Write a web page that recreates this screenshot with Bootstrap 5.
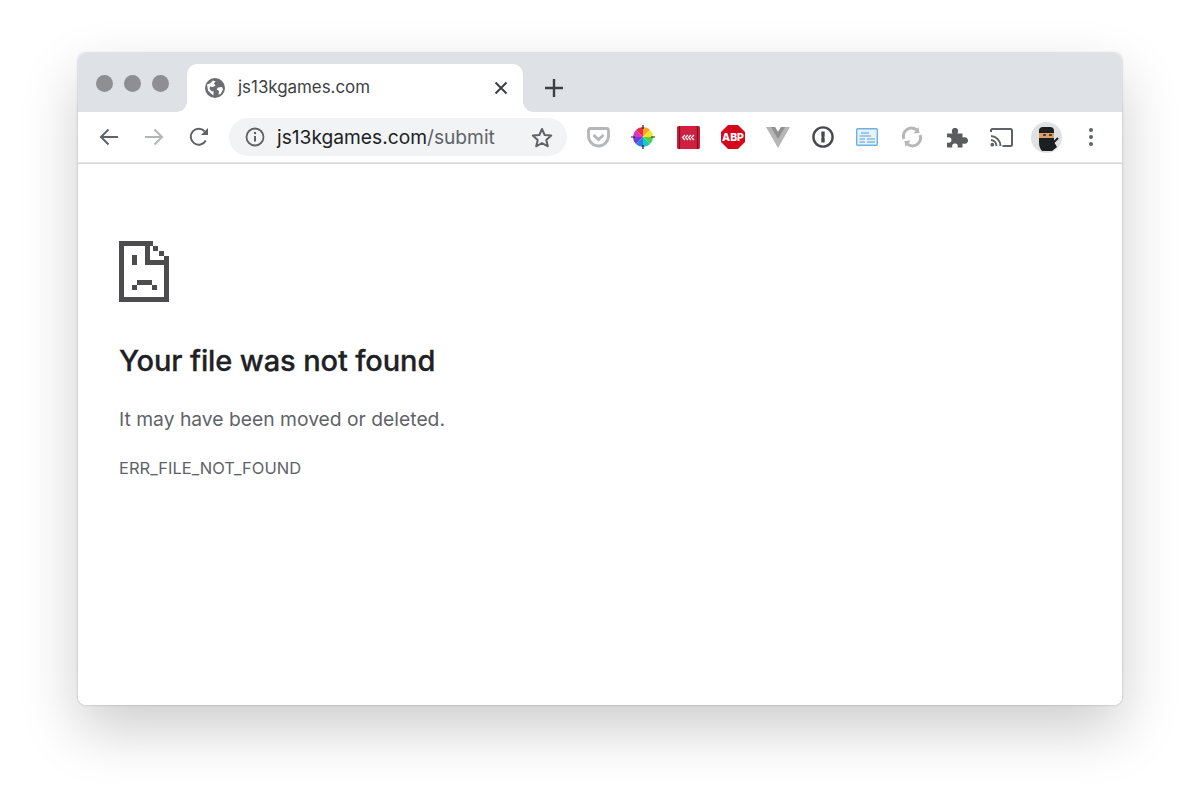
<!DOCTYPE html>
<html lang="en">

<head>
  <meta charset="UTF-8">
  <meta name="viewport" content="width=device-width, initial-scale=1.0">
  <title>Your file was not found</title>
  <link href="https://cdn.jsdelivr.net/npm/bootstrap@5.3.0/dist/css/bootstrap.min.css" rel="stylesheet">
  <style>
    body {
      background: #fff;
      font-family: Inter, "Liberation Sans", sans-serif;
      padding: 53px 78px 0;
      height: 808px;
      overflow: hidden;
    }
    .browser-window {
      height: 652px;
      background: #fff;
      border-radius: 8px;
      overflow: hidden;
    }
    .window-shadow {
      border-radius: 8px;
      box-shadow: 0 0 2px rgba(0, 0, 0, .32), 0 24px 58px rgba(0, 0, 0, .2);
    }
    .tab-strip {
      height: 59px;
      background: #dee1e6;
      padding-left: 18px;
    }
    .traffic-lights {
      width: 91px;
      height: 60px;
      gap: 11px;
    }
    .traffic-dot {
      width: 17px;
      height: 17px;
      border-radius: 50%;
      background: #8e8f93;
    }
    .active-tab {
      position: relative;
      width: 336px;
      height: 48px;
      margin-top: 11px;
      background: #fff;
      border-radius: 10px 10px 0 0;
      padding: 0 15px 0 18px;
      font-size: 16.9px;
      color: #3c4043;
    }
    .tab-label { margin-left: 5px; }
    .active-tab::before,
    .active-tab::after {
      content: "";
      position: absolute;
      bottom: 0;
      width: 10px;
      height: 10px;
      background: radial-gradient(circle at var(--cx) 0, #dee1e6 9.5px, #fff 10px);
    }
    .active-tab::before { left: -10px; --cx: 0; }
    .active-tab::after { right: -10px; --cx: 10px; }
    .new-tab {
      margin: 11px 0 0 22px;
      height: 48px;
    }
    .tool-bar {
      height: 52px;
      padding: 0 0 1px 9px;
      border-bottom: 1px solid #d5d7da;
      box-shadow: inset 0 -1px 0 #e6e7e9;
    }
    .tool-slot {
      width: 44.8px;
      height: 38px;
      flex: none;
    }
    .omni-box {
      width: 338px;
      height: 38px;
      margin-left: 7.600px;
      margin-right: 9.200px;
      padding: 0 14px 0 16px;
      border-radius: 19px;
      background: #f1f3f4;
      font-size: 19.2px;
      color: #202124;
    }
    .omni-path { color: #5f6368; }
    .error-pane {
      padding: 77px 41px 0;
    }
    .error-title {
      font-size: 29px;
      font-weight: 500;
      letter-spacing: -.12px;
      -webkit-text-stroke: .3px #202124;
      line-height: 36px;
      color: #202124;
      margin: 41px 0 0;
    }
    .error-text {
      font-size: 19.3px;
      line-height: 26px;
      color: #5f6368;
      margin: 27px 0 0;
    }
    .error-code {
      font-size: 16.5px;
      line-height: 20px;
      color: #5f6368;
      margin: 26px 0 0;
    }
  </style>
</head>

<body>
  <div class="window-shadow">
    <div class="browser-window d-flex flex-column">
      <div class="tab-strip d-flex">
        <div class="traffic-lights d-flex align-items-center flex-shrink-0">
          <span class="traffic-dot"></span><span class="traffic-dot"></span><span class="traffic-dot"></span>
        </div>
        <div class="active-tab d-flex align-items-center">
          <svg width="20" height="20" viewBox="0 0 20 20" class="me-2 flex-shrink-0">
            <circle cx="10" cy="10" r="10" fill="#6a6d71"/>
            <path d="M2 6.500 5 5.500 8 2.500 10.500 3.500 9 5.500 10.500 7.500 8 9 5 8.500 4.500 11 7 13.500 8.500 13 8.500 17.500 6 15.500 3 12.500ZM13 9.500 17 9 18 11.500 15.500 16 13.500 16.500 14 13 11.500 11.500Z" fill="#fff"/>
          </svg>
          <span class="tab-label flex-grow-1">js13kgames.com</span>
          <svg width="14" height="14" viewBox="0 0 14 14"><path d="M1.500 1.500 12.500 12.500M12.500 1.500 1.500 12.500" stroke="#3c4043" stroke-width="2" fill="none"/></svg>
        </div>
        <div class="new-tab d-flex align-items-center">
          <svg width="18" height="18" viewBox="0 0 18 18"><path d="M9 0V18M0 9H18" stroke="#3c4043" stroke-width="2.400"/></svg>
        </div>
      </div>

      <div class="tool-bar d-flex align-items-center">
        <div class="tool-slot d-flex align-items-center justify-content-center">
          <svg width="20" height="18" viewBox="0 0 20 18"><path d="M19 9H2M9.500 1.500 2 9l7.500 7.500" stroke="#5f6368" stroke-width="2" fill="none"/></svg>
        </div>
        <div class="tool-slot d-flex align-items-center justify-content-center">
          <svg width="20" height="18" viewBox="0 0 20 18"><path d="M1 9H18M10.500 1.500 18 9l-7.500 7.500" stroke="#b3b5b8" stroke-width="2" fill="none"/></svg>
        </div>
        <div class="tool-slot d-flex align-items-center justify-content-center">
          <svg width="20" height="20" viewBox="0 0 20 20"><path d="M16.800 13.500A8 8 0 1 1 15.700 4.300" stroke="#5f6368" stroke-width="2" fill="none"/><path d="M19 1V8H12Z" fill="#5f6368"/></svg>
        </div>
        <div class="omni-box d-flex align-items-center flex-shrink-0">
          <svg width="20" height="20" viewBox="0 0 20 20" class="flex-shrink-0 me-2"><circle cx="10" cy="10" r="8.500" stroke="#5f6368" stroke-width="1.800" fill="none"/><path d="M10 9v5.500" stroke="#5f6368" stroke-width="2"/><circle cx="10" cy="6" r="1.200" fill="#5f6368"/></svg>
          <span class="flex-grow-1 ms-1">js13kgames.com<span class="omni-path">/submit</span></span>
          <svg width="22" height="21" viewBox="0 0 22 21" class="flex-shrink-0"><path d="M11 2l2.700 6 6.500.6-4.900 4.300 1.500 6.400L11 16l-5.800 3.300 1.500-6.400L1.800 8.600 8.300 8Z" stroke="#5f6368" stroke-width="2" fill="none" stroke-linejoin="round"/></svg>
        </div>

        <div class="tool-slot d-flex align-items-center justify-content-center">
          <svg width="23" height="21" viewBox="0 0 23 21"><path d="M1.500 3.500Q1.500 1.500 3.500 1.500H19.500Q21.500 1.500 21.500 3.500V9A10 10 0 0 1 1.500 9Z" fill="none" stroke="#b4b6b8" stroke-width="2.800"/><path d="M6.500 8 11.500 12.500 16.500 8" fill="none" stroke="#b4b6b8" stroke-width="2.800"/></svg>
        </div>
        <div class="tool-slot d-flex align-items-center justify-content-center">
          <svg width="24" height="24" viewBox="0 0 24 24">
            <path d="M12 12 12 2A10 10 0 0 1 19.100 4.900Z" fill="#f5a623"/>
            <path d="M12 12 19.100 4.900A10 10 0 0 1 22 12Z" fill="#f3e324"/>
            <path d="M12 12H22A10 10 0 0 1 19.100 19.100Z" fill="#4cd14a"/>
            <path d="M12 12 19.100 19.100A10 10 0 0 1 12 22Z" fill="#18c9c0"/>
            <path d="M12 12V22A10 10 0 0 1 4.900 19.100Z" fill="#2b7de9"/>
            <path d="M12 12 4.900 19.100A10 10 0 0 1 2 12Z" fill="#6a3fd8"/>
            <path d="M12 12H2A10 10 0 0 1 4.900 4.900Z" fill="#d935c9"/>
            <path d="M12 12 4.900 4.900A10 10 0 0 1 12 2Z" fill="#ee2b45"/>
            <path d="M12 0V24M0 12H24" stroke="#1b1b1b" stroke-width="1.200" stroke-dasharray="4 16"/>
          </svg>
        </div>
        <div class="tool-slot d-flex align-items-center justify-content-center">
          <svg width="23" height="23" viewBox="0 0 23 23"><rect width="23" height="23" rx="1.500" fill="#d0203f"/><path d="M2.500 0V23M20.500 0V23" stroke="#7e0e22" stroke-width="1.200"/><path d="M8 9 5.500 11.500 8 14M11 9 8.500 11.500 11 14M14 9 11.500 11.500 14 14M17 9 14.500 11.500 17 14" stroke="#fff" stroke-width="1.200" fill="none"/></svg>
        </div>
        <div class="tool-slot d-flex align-items-center justify-content-center">
          <svg width="24" height="24" viewBox="0 0 24 24"><path d="M7 0H17L24 7V17L17 24H7L0 17V7Z" fill="#d4071c"/><text x="12" y="16" text-anchor="middle" fill="#fff" font-size="10.500" font-weight="800" font-family="Inter, 'Liberation Sans', sans-serif">ABP</text></svg>
        </div>
        <div class="tool-slot d-flex align-items-center justify-content-center">
          <svg width="24" height="21" viewBox="0 0 24 21"><path d="M0 0H9L12 5 15 0H24L12 21Z" fill="#b5b5b5"/><path d="M5 0H9L12 5 15 0H19L12 12Z" fill="#8f8f8f"/></svg>
        </div>
        <div class="tool-slot d-flex align-items-center justify-content-center">
          <svg width="22" height="22" viewBox="0 0 22 22"><circle cx="11" cy="11" r="9.600" fill="none" stroke="#48494b" stroke-width="2.400"/><path d="M9.300 5.500H12.700V10.500L12 11 12.700 11.700V16.500H9.300V11.700L10 11 9.300 10.500Z" fill="#48494b"/></svg>
        </div>
        <div class="tool-slot d-flex align-items-center justify-content-center">
          <svg width="22" height="18" viewBox="0 0 22 18"><rect x=".7" y=".7" width="20.600" height="16.600" rx="1" fill="#e6f2fa" stroke="#6fb1dc" stroke-width="1.400"/><path d="M5 5H13M3.500 8H15M3.500 11H9M11 11H19M3.500 14H9M11 14H19" stroke="#88bbdf" stroke-width="1.300"/></svg>
        </div>
        <div class="tool-slot d-flex align-items-center justify-content-center">
          <svg width="20" height="22" viewBox="0 0 20 22"><path d="M2 13A8 8 0 0 1 14.500 3.900M18 9A8 8 0 0 1 5.500 18.100" fill="none" stroke="#b5b6b8" stroke-width="3"/><path d="M11.500 7.500 17.500 7 16.500 1ZM8.500 14.500 2.500 15 3.500 21Z" fill="#b5b6b8"/></svg>
        </div>
        <div class="tool-slot d-flex align-items-center justify-content-center">
          <svg width="22" height="21" viewBox="0 0 22 21"><path d="M1 6.500H6.500C5 3 6.500 1 9 1S13 3 11.500 6.500H16.500V10.500C20 9.500 22 11 22 13.500S20 17.500 16.500 16.500V20.500H11.500C12.500 17.500 11 16.500 9 16.500S5.500 17.500 6.500 20.500H1V15.500C4 16.500 5.500 15 5.500 13S4 9.500 1 10.500Z" fill="#5a5c60"/></svg>
        </div>
        <div class="tool-slot d-flex align-items-center justify-content-center">
          <svg width="23" height="19" viewBox="0 0 23 19"><path d="M1 4V2.500Q1 1 2.500 1H20.500Q22 1 22 2.500V16.500Q22 18 20.500 18H12.500" fill="none" stroke="#5f6368" stroke-width="2"/><path d="M1 8A10 10 0 0 1 10.500 18M1 12A6 6 0 0 1 6.500 18" fill="none" stroke="#5f6368" stroke-width="2"/><circle cx="2.300" cy="16.700" r="1.900" fill="#5f6368"/></svg>
        </div>
        <div class="tool-slot d-flex align-items-center justify-content-center">
          <svg width="31" height="31" viewBox="0 0 31 31">
            <circle cx="15.500" cy="15.500" r="15.500" fill="#dfe1e3"/>
            <path d="M8 8.500Q8 5 12 5H19Q23 5 23 9V20L26 25 21 29H11Q8 26 8 20Z" fill="#1d1e20"/>
            <rect x="8" y="11" width="15" height="5" fill="#d9a066"/>
            <path d="M12 13H15M18 13H21" stroke="#2a2320" stroke-width="1.500"/>
            <path d="M21 22 27 16" stroke="#1d1e20" stroke-width="2"/>
          </svg>
        </div>
        <div class="tool-slot d-flex align-items-center justify-content-center">
          <svg width="6" height="20" viewBox="0 0 6 20"><circle cx="3" cy="3" r="2" fill="#5f6368"/><circle cx="3" cy="10" r="2" fill="#5f6368"/><circle cx="3" cy="17" r="2" fill="#5f6368"/></svg>
        </div>
      </div>

      <div class="error-pane flex-grow-1">
        <svg width="50" height="61" viewBox="0 0 50 61" class="d-block" shape-rendering="crispEdges">
          <path d="M0 0H34V5H31V19H45V15H50V61H0ZM5 5V56H45V24H26V5Z" fill="#4c4c4e" fill-rule="evenodd"/>
          <path d="M34 5H39V10H34ZM40 10H45V15H40Z" fill="#4c4c4e"/>
          <rect x="13" y="14" width="5" height="10" fill="#4c4c4e"/>
          <path d="M18 39H33V44H18ZM13 44H18V49H13ZM33 44H38V49H33Z" fill="#4c4c4e"/>
        </svg>
        <h1 class="error-title">Your file was not found</h1>
        <p class="error-text">It may have been moved or deleted.</p>
        <div class="error-code">ERR_FILE_NOT_FOUND</div>
      </div>
    </div>
  </div>

  <script src="https://cdn.jsdelivr.net/npm/bootstrap@5.3.0/dist/js/bootstrap.bundle.min.js"></script>
</body>

</html>
